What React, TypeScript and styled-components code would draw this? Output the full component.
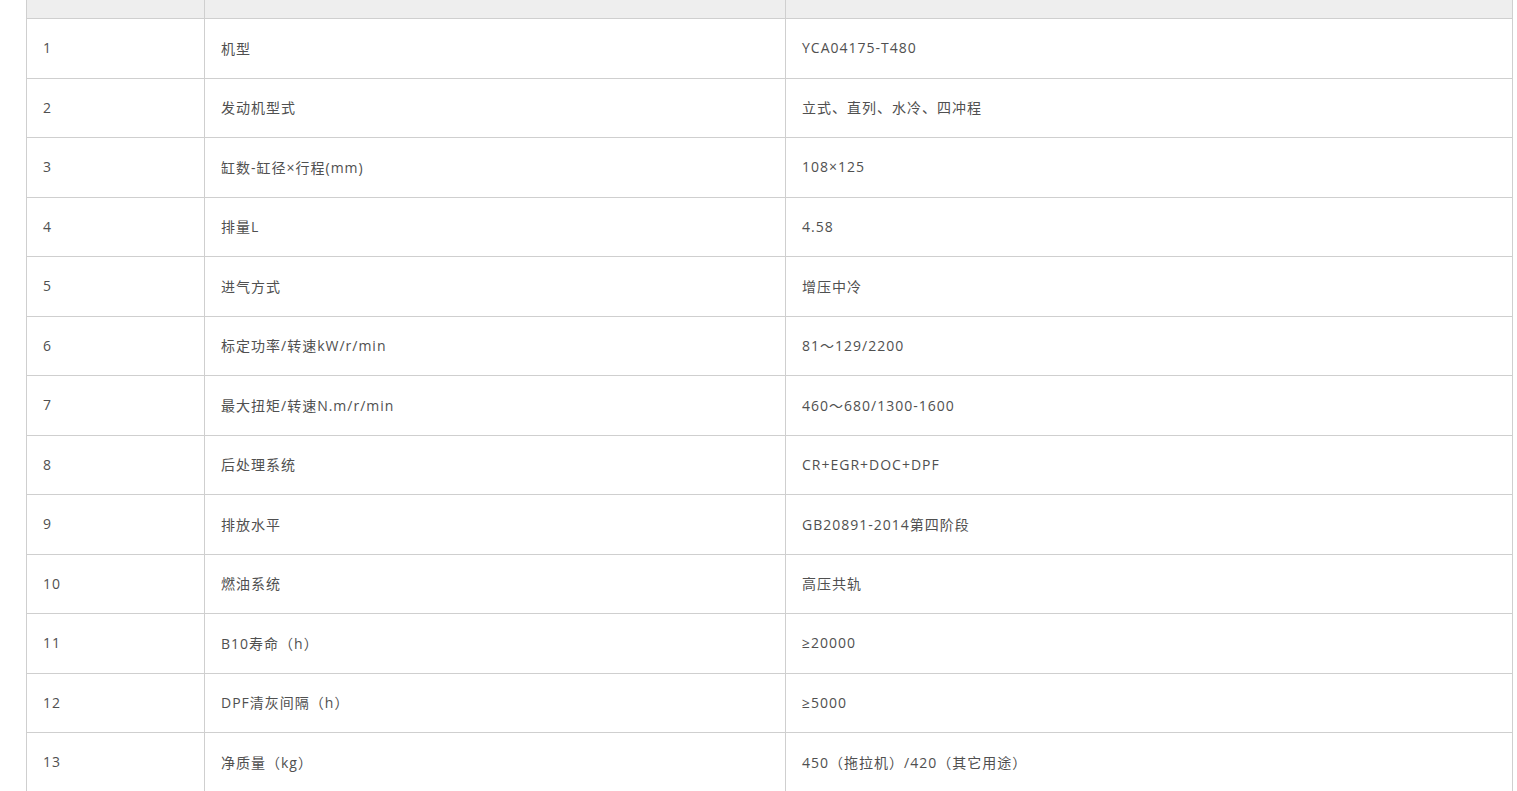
import React from "react";
import styled, { createGlobalStyle } from "styled-components";

const GlobalStyle = createGlobalStyle`
  html, body { margin: 0; padding: 0; background: #fff; }
  body { font-family: "Open Sans", "Noto Sans CJK SC", sans-serif; overflow: hidden; }
`;

const Page = styled.div`
  padding: 0 4px 0 26px;
`;

const Table = styled.table`
  width: 1486px;
  border-collapse: collapse;
  table-layout: fixed;
  font-size: 14px;
  letter-spacing: 1px;
  color: #505050;
`;

const HeadCell = styled.th`
  height: 18px;
  padding: 0;
  background: #eeeeee;
  border: 1px solid #cfcfcf;
  border-top: none;
`;

const Cell = styled.td<{ $tall?: boolean }>`
  height: ${(p) => (p.$tall ? 60 : 59)}px;
  padding: 0 16px 2px;
  border: 1px solid #cfcfcf;
  font-weight: 400;
  vertical-align: middle;
  box-sizing: border-box;
  white-space: nowrap;
`;

const rows: [string, string][] = [
  ["机型", "YCA04175-T480"],
  ["发动机型式", "立式、直列、水冷、四冲程"],
  ["缸数-缸径×行程(mm)", "108×125"],
  ["排量L", "4.58"],
  ["进气方式", "增压中冷"],
  ["标定功率/转速kW/r/min", "81～129/2200"],
  ["最大扭矩/转速N.m/r/min", "460～680/1300-1600"],
  ["后处理系统", "CR+EGR+DOC+DPF"],
  ["排放水平", "GB20891-2014第四阶段"],
  ["燃油系统", "高压共轨"],
  ["B10寿命（h）", "≥20000"],
  ["DPF清灰间隔（h）", "≥5000"],
  ["净质量（kg）", "450（拖拉机）/420（其它用途）"],
];

export default function App() {
  return (
    <Page>
      <GlobalStyle />
      <Table>
        <colgroup>
          <col style={{ width: 178 }} />
          <col style={{ width: 581 }} />
          <col style={{ width: 727 }} />
        </colgroup>
        <thead>
          <tr>
            <HeadCell />
            <HeadCell />
            <HeadCell />
          </tr>
        </thead>
        <tbody>
          {rows.map(([k, v], i) => (
            <tr key={i}>
              <Cell $tall={i % 2 === 0}>{i + 1}</Cell>
              <Cell $tall={i % 2 === 0}>{k}</Cell>
              <Cell $tall={i % 2 === 0}>{v}</Cell>
            </tr>
          ))}
        </tbody>
      </Table>
    </Page>
  );
}
